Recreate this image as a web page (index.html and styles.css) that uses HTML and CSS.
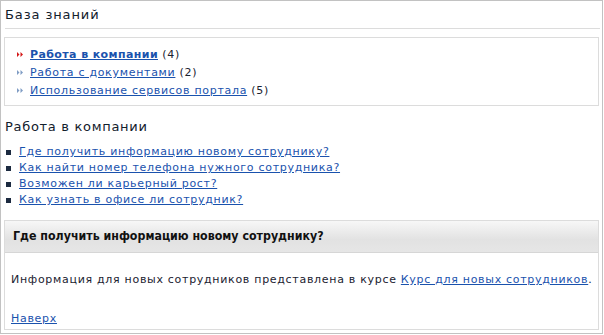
FILE: index.html
```html
<!DOCTYPE html>
<html>
  <head>
    <meta charset="UTF-8" />
    <title>База знаний</title>
    <link rel="stylesheet" href="styles.css">
  </head>
  <body>
    <div class="kb">
      <h1 class="kb-title">База знаний</h1>

      <div class="kb-sections">
        <ul>
          <li class="current">
            <svg class="arr" width="6" height="5" viewBox="0 0 6 5"><path d="M0 0L2.5 2.5L0 5Z M3.5 0L6 2.5L3.5 5Z" /></svg><a href="#">Работа в компании</a> (4)
          </li>
          <li>
            <svg class="arr" width="6" height="5" viewBox="0 0 6 5"><path d="M0 0L2.5 2.5L0 5Z M3.5 0L6 2.5L3.5 5Z" /></svg><a href="#">Работа с документами</a> (2)
          </li>
          <li>
            <svg class="arr" width="6" height="5" viewBox="0 0 6 5"><path d="M0 0L2.5 2.5L0 5Z M3.5 0L6 2.5L3.5 5Z" /></svg><a href="#">Использование сервисов портала</a> (5)
          </li>
        </ul>
      </div>

      <h2 class="kb-subtitle">Работа в компании</h2>
      <ul class="kb-questions">
        <li><a href="#">Где получить информацию новому сотруднику?</a></li>
        <li><a href="#">Как найти номер телефона нужного сотрудника?</a></li>
        <li><a href="#">Возможен ли карьерный рост?</a></li>
        <li><a href="#">Как узнать в офисе ли сотрудник?</a></li>
      </ul>

      <div class="kb-answer">
        <div class="kb-answer-head">Где получить информацию новому сотруднику?</div>
        <div class="kb-answer-body">
          <p>Информация для новых сотрудников представлена в курсе <a href="#">Курс для новых сотрудников</a>.</p>
          <a href="#" class="top-link">Наверх</a>
        </div>
      </div>
    </div>
  </body>
</html>
```

FILE: styles.css
```css
* {
  margin: 0;
  padding: 0;
  box-sizing: border-box;
}
body {
  font-family: 'DejaVu Sans', sans-serif;
  font-size: 11px;
  letter-spacing: 0.7px;
  color: #1a2230;
  background: #fff;
}
a {
  color: #1a52ad;
  text-decoration: underline;
}
.kb {
  width: 603px;
  height: 334px;
  border: 1px solid #c2c2c2;
  padding: 0 3px 0 3px;
}
.kb-title {
  font-size: 13px;
  font-weight: normal;
  letter-spacing: 0.9px;
  color: #12202c;
  padding-top: 6px;
  height: 28px;
  margin-left: 1px;
  margin-right: -1px;
  border-bottom: 1px solid #dcdcdc;
}
.kb-sections {
  margin: 8px 0 0 0;
  border: 1px solid #dcdcdc;
  padding: 8px 0 5px 12px;
}
.kb-sections li {
  list-style: none;
  line-height: 18px;
  height: 18px;
}
.kb-sections .arr {
  fill: #7f9cc4;
  margin-right: 7px;
  vertical-align: 1px;
}
.kb-sections .current .arr {
  fill: #d41818;
}
.kb-sections .current a {
  font-weight: bold;
  letter-spacing: 0.4px;
}
.kb-subtitle {
  font-size: 13px;
  font-weight: normal;
  letter-spacing: 0.7px;
  color: #12202c;
  margin: 13px 0 0 1px;
  line-height: 16px;
}
.kb-questions {
  margin: 9px 0 0 2px;
}
.kb-questions li {
  list-style: none;
  line-height: 16px;
  padding-left: 13px;
  position: relative;
}
.kb-questions li:before {
  content: '';
  position: absolute;
  left: 0;
  top: 6px;
  width: 5px;
  height: 5px;
  background: #1c2a40;
}
.kb-answer {
  margin-top: 12px;
  border: 1px solid #dcdcdc;
  height: 110px;
}
.kb-answer-head {
  height: 32px;
  line-height: 31px;
  padding-left: 8px;
  font-family: 'DejaVu Sans Condensed', 'DejaVu Sans', sans-serif;
  font-size: 12.3px;
  font-weight: bold;
  letter-spacing: 0;
  color: #111;
  background: linear-gradient(#f7f7f7, #e2e2e2 60%, #e6e6e6);
  border-bottom: 1px solid #d6d6d6;
}
.kb-answer-body {
  padding: 19px 0 0 6px;
}
.kb-answer-body p {
  line-height: 16px;
  margin-bottom: 23px;
}
.top-link {
  line-height: 16px;
}
```
